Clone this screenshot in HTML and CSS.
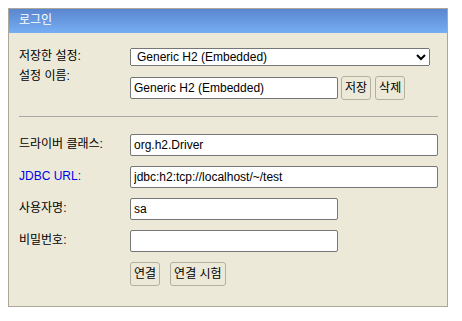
FILE: index.html
```html
<!DOCTYPE html>
<html lang="ko">
<head>
<meta charset="UTF-8" />
<title>H2 Console</title>
<link rel="stylesheet" href="styles.css">
</head>
<body>
  <div class="login">
    <div class="login-head">로그인</div>
    <form class="login-body">
      <div class="row row-first">
        <label class="cap">저장한 설정:</label>
        <div class="field">
          <select class="setting">
            <option>Generic H2 (Embedded)</option>
          </select>
        </div>
      </div>
      <div class="row row-name">
        <label class="cap">설정 이름:</label>
        <div class="field field-name">
          <input type="text" class="short" value="Generic H2 (Embedded)" />
          <div class="btns">
            <button type="button">저장</button>
            <button type="button">삭제</button>
          </div>
        </div>
      </div>
      <hr class="sep" />
      <div class="row">
        <label class="cap">드라이버 클래스:</label>
        <div class="field"><input type="text" class="long" value="org.h2.Driver" /></div>
      </div>
      <div class="row">
        <label class="cap link">JDBC URL:</label>
        <div class="field"><input type="text" class="long" value="jdbc:h2:tcp://localhost/~/test" /></div>
      </div>
      <div class="row">
        <label class="cap">사용자명:</label>
        <div class="field"><input type="text" class="short" value="sa" /></div>
      </div>
      <div class="row">
        <label class="cap">비밀번호:</label>
        <div class="field"><input type="password" class="short" value="" /></div>
      </div>
      <div class="row">
        <span></span>
        <div class="field actions">
          <button type="button">연결</button>
          <button type="button">연결 시험</button>
        </div>
      </div>
    </form>
  </div>
</body>
</html>
```

FILE: styles.css
```css
* {
  box-sizing: border-box;
}
body {
  margin: 8px;
  background: #fff;
  font-family: "Liberation Sans", "Noto Sans CJK KR", sans-serif;
  font-size: 12px;
  color: #000;
}
input, select, button {
  font-family: "Liberation Sans", "Noto Sans CJK KR", sans-serif;
  font-size: 12px;
  color: #000;
}
.login {
  width: 440px;
  background: #ece9d8;
  border: 1px solid #aca899;
}
.login-head {
  height: 24px;
  padding: 3px 10px 0 10px;
  line-height: 16px;
  color: #fff;
  background: linear-gradient(#5a86cf, #76aef3);
}
.login-body {
  display: flex;
  flex-direction: column;
  padding: 15px 9px 20px 10px;
}
.row {
  display: grid;
  grid-template-columns: 111px 1fr;
  align-items: start;
  margin-top: 10px;
}
.row-first,
.row-name {
  margin-top: 0;
}
.cap {
  line-height: 16px;
  padding-top: 2px;
}
.row-first .cap {
  padding-top: 0;
}
.link {
  color: #0000ee;
}
.field {
  display: flex;
  align-items: center;
}
.field-name {
  padding-top: 10px;
}
.setting {
  width: 300px;
  height: 18px;
  padding: 0 2px;
}
input[type=text], input[type=password] {
  height: 22px;
  padding: 0 3px;
  border: 1px solid #767676;
  border-radius: 2px;
  background: #fff;
}
.short {
  width: 208px;
}
.long {
  width: 308px;
}
.btns {
  display: flex;
  gap: 4px;
  margin-left: 3px;
}
button {
  height: 24px;
  padding: 0 3px;
  background: #ece9d8;
  border: 1px solid #b3b0a2;
  border-radius: 3px;
  line-height: 20px;
}
.actions {
  gap: 10px;
}
.sep {
  margin: 16px 0 7px 0;
  border: none;
  border-top: 1px solid #a8a8a8;
  height: 0;
}
```
